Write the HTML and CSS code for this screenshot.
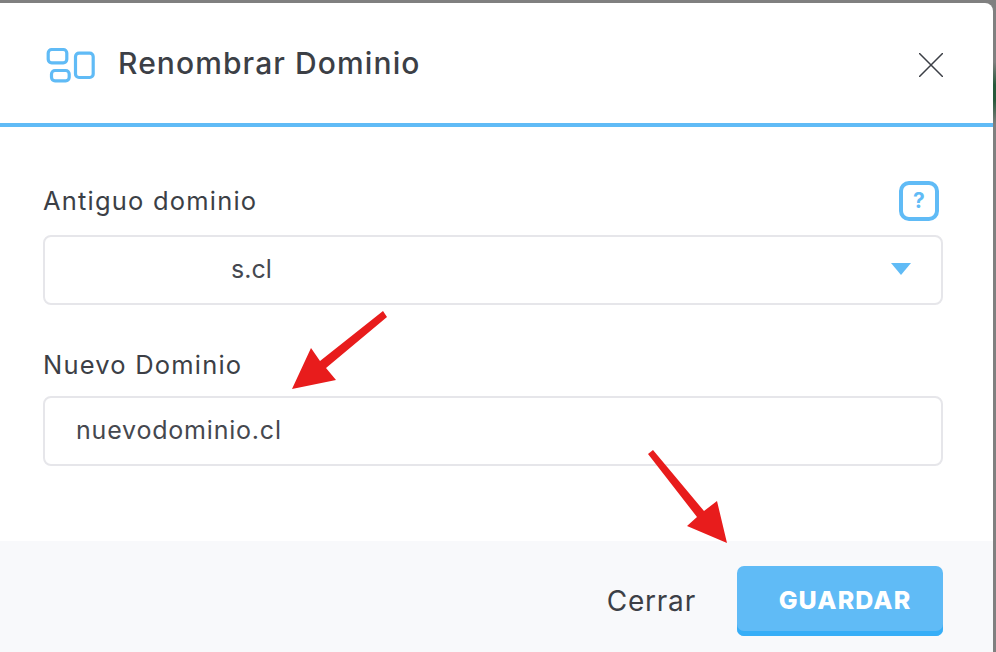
FILE: index.html
```html
<!DOCTYPE html>
<html lang="es">
<head>
  <meta charset="UTF-8">
  <title>Renombrar Dominio</title>
  <link rel="stylesheet" href="styles.css">
</head>
<body>
  <div class="modal">
    <div class="modalHeader">
      <svg class="headerIcon" width="50" height="36" viewBox="0 0 50 36" fill="none" stroke="#60bbf6" stroke-width="3.2">
        <rect x="2.200" y="2.500" width="18.600" height="13.300" rx="3.500"/>
        <rect x="5.500" y="23.500" width="17.700" height="10.300" rx="3.500"/>
        <rect x="29.500" y="6.200" width="17.700" height="24.300" rx="3.500"/>
      </svg>
      <div class="modalTitle">Renombrar Dominio</div>
      <svg class="closeIcon" width="24" height="24" viewBox="0 0 24 24" stroke="#3c3f46" stroke-width="1.5">
        <path d="M0 0 L24 24 M24 0 L0 24"/>
      </svg>
    </div>
    <div class="modalBody">
      <div class="labelRow">
        <label class="fieldLabel">Antiguo dominio</label>
        <div class="helpBtn">?</div>
      </div>
      <div class="field selectField">
        <span class="oldValue">s.cl</span>
        <span class="caret"></span>
      </div>
      <label class="fieldLabel secondLabel">Nuevo Dominio</label>
      <div class="field">nuevodominio.cl</div>
    </div>
    <div class="modalFooter">
      <span class="closeLink">Cerrar</span>
      <button class="saveBtn">GUARDAR</button>
    </div>
  </div>

  <svg class="arrow arrowOne" width="100" height="85" viewBox="0 0 100 85">
    <path fill="#e81c1c" d="M92 1 L96 7 L35 58 L45 70 L1 79 L20 38 L29 51 Z"/>
  </svg>
  <svg class="arrow arrowTwo" width="84" height="96" viewBox="0 0 84 96">
    <path fill="#e81c1c" d="M6 1 L1 5 L50 68 L40 77 L80 94 L70 52 L57 62 Z"/>
  </svg>
</body>
</html>
```

FILE: styles.css
```css
body {
  margin: 0;
  padding: 3px 3px 0 0;
  box-sizing: border-box;
  height: 652px;
  overflow: hidden;
  background: linear-gradient(to bottom, #808080 62px, #27593b 85px, #27593b 100px, #808080 124px);
  font-family: "Inter", "Liberation Sans", sans-serif;
  color: #3c3f46;
  position: relative;
}
.modal {
  height: 649px;
  background: #fff;
  border-top-right-radius: 8px;
  display: flex;
  flex-direction: column;
  overflow: hidden;
}
.modalHeader {
  height: 120px;
  flex: none;
  border-bottom: 4px solid #60bbf6;
  display: flex;
  align-items: center;
  padding: 0 50px 0 46px;
}
.headerIcon {
  flex: none;
  margin-top: 4px;
}
.closeIcon {
  flex: none;
  margin-top: 4px;
}
.modalTitle {
  flex: 1;
  margin-left: 22px;
  font-size: 30px;
  font-weight: 500;
  letter-spacing: 1.1px;
}
.modalBody {
  flex: 1;
  padding: 54px 50px 0 43px;
}
.labelRow {
  display: flex;
  justify-content: space-between;
  align-items: center;
  height: 40px;
  margin-bottom: 14px;
}
.fieldLabel {
  display: block;
  font-size: 25.5px;
  line-height: 28px;
  letter-spacing: 1.2px;
}
.secondLabel {
  margin-top: 46px;
  margin-bottom: 17px;
}
.helpBtn {
  width: 32px;
  height: 32px;
  border: 4px solid #60bbf6;
  border-radius: 10px;
  margin-right: 4px;
  color: #60bbf6;
  font-size: 21px;
  font-weight: 700;
  text-align: center;
  line-height: 31px;
}
.field {
  border: 2px solid #e6e6ea;
  border-radius: 8px;
  padding: 0 30px 2px 31px;
  height: 64px;
  display: flex;
  align-items: center;
  font-size: 25px;
  letter-spacing: 0.8px;
  color: #45484f;
}
.selectField {
  justify-content: space-between;
}
.oldValue {
  margin-left: 155px;
  letter-spacing: 0;
}
.caret {
  border-left: 10px solid transparent;
  border-right: 10px solid transparent;
  border-top: 12px solid #60bbf6;
}
.modalFooter {
  height: 111px;
  flex: none;
  background: #f8f9fb;
  display: flex;
  align-items: flex-start;
  justify-content: flex-end;
  padding: 25px 50px 0 0;
  box-sizing: border-box;
}
.closeLink {
  font-size: 28px;
  line-height: 70px;
  letter-spacing: 0.8px;
  margin-right: 41px;
}
.saveBtn {
  width: 206px;
  height: 70px;
  border: 0;
  border-radius: 7px;
  background: #60bbf6;
  box-shadow: inset 0 -5px 0 #36aef7;
  color: #fff;
  font-family: "Inter", "Liberation Sans", sans-serif;
  font-size: 25px;
  font-weight: 800;
  letter-spacing: 1.1px;
  padding: 0 0 2px 10px;
}
.arrow {
  position: absolute;
}
.arrowOne {
  left: 291px;
  top: 310px;
}
.arrowTwo {
  left: 647px;
  top: 449px;
}
```
